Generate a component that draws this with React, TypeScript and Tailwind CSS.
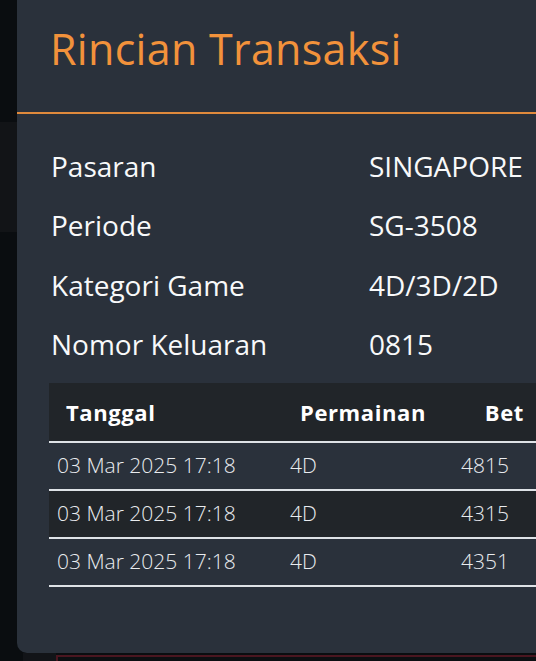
const info = [
  { label: "Pasaran", value: "SINGAPORE" },
  { label: "Periode", value: "SG-3508" },
  { label: "Kategori Game", value: "4D/3D/2D" },
  { label: "Nomor Keluaran", value: "0815" },
];

const rows = [
  { date: "03 Mar 2025 17:18", game: "4D", bet: "4815" },
  { date: "03 Mar 2025 17:18", game: "4D", bet: "4315" },
  { date: "03 Mar 2025 17:18", game: "4D", bet: "4351" },
];

export default function App() {
  return (
    <div
      className="w-[536px] h-[661px] overflow-hidden flex bg-[#0a0d10]"
      style={{ fontFamily: '"Open Sans", "Noto Sans", sans-serif' }}
    >
      {/* left strip behind the modal */}
      <div className="w-[17px] flex-none flex flex-col">
        <div className="h-[122px] bg-[#0a0d10]" />
        <div className="h-[110px] bg-[#121417]" />
        <div className="flex-1 bg-[#0a0d10]" />
      </div>

      <div className="flex flex-col flex-none w-[560px]">
        {/* modal panel */}
        <div className="h-[653px] flex-none bg-[#2a313b] rounded-bl-[10px] flex flex-col">
          <div className="h-[114px] flex-none flex items-center pl-[33px] pb-[16px] border-b-2 border-[#e08a3c]">
            <h1 className="text-[43px] leading-none font-medium text-[#f2923b] tracking-[0.3px]">
              Rincian Transaksi
            </h1>
          </div>

          <div className="pl-[32px] pt-[22px]">
            {info.map((r) => (
              <div key={r.label} className="h-[59.5px] flex items-center pl-[2px] text-[28px] text-[#f8f9fa]">
                <div className="w-[318px]">{r.label}</div>
                <div>{r.value}</div>
              </div>
            ))}

            <div className="mt-[9px] w-[540px]">
              <div className="h-[60px] flex items-center bg-[#212529] border-b-2 border-[#dee2e6] text-[22px] tracking-[0.6px] font-bold text-white">
                <div className="w-[233px] pl-[17px]">Tanggal</div>
                <div className="w-[192px] pl-[18px]">Permainan</div>
                <div className="w-[50px] text-right">Bet</div>
              </div>
              {rows.map((r, i) => (
                <div
                  key={i}
                  className={`h-[48px] flex items-center border-b-2 border-[#dee2e6] text-[21px] font-light text-[#e9ecef] ${
                    i === 1 ? "bg-[#212529]" : "bg-[#2a313b]"
                  }`}
                >
                  <div className="w-[233px] pl-[8px]">{r.date}</div>
                  <div className="w-[167px] pl-[8px]">{r.game}</div>
                  <div className="w-[60px] text-right">{r.bet}</div>
                </div>
              ))}
            </div>
          </div>
        </div>

        {/* element behind, peeking below the modal */}
        <div className="flex-1 flex">
          <div className="w-[6px] bg-[#0a0d10]" />
          <div className="w-[33px] bg-[#121418]" />
          <div className="flex-1 mt-[2px] border-l-2 border-t-2 border-[#4a1620] bg-[#0c0f12]" />
        </div>
      </div>
    </div>
  );
}
